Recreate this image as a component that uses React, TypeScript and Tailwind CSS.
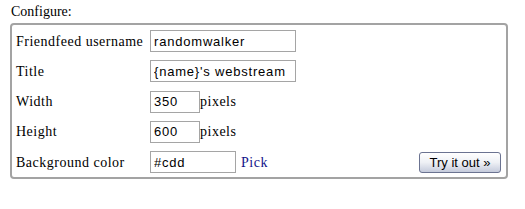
import React from "react";

const serif = { fontFamily: '"Liberation Serif", "Times New Roman", serif' };

function Field({ value, w }: { value: string; w: string }) {
  return (
    <input
      readOnly
      value={value}
      className={`h-[22px] ${w} border border-[#a5a5a5] bg-white pl-[3px] text-[13px] tracking-[0.8px] text-black outline-none`}
      style={{ fontFamily: '"Liberation Sans", Arial, sans-serif' }}
    />
  );
}

function Label({ children }: { children: React.ReactNode }) {
  return <div className="tracking-[0.5px]">{children}</div>;
}

export default function App() {
  return (
    <div className="w-[525px] h-[209px] bg-white text-black text-[14px]" style={serif}>
      <div className="pt-[4px] pl-[11px] leading-[16px]">Configure:</div>
      <div className="ml-[10px] mt-[3px] w-[498px] h-[156px] border-2 border-[#a3a3a3] rounded-[4px] pl-[4px] pr-[5px] pt-[5px]">
        <div className="grid grid-cols-[134px_1fr] auto-rows-[22px] gap-y-[8.25px] items-center">
          <Label>Friendfeed username</Label>
          <div className="flex"><Field value="randomwalker" w="w-[146px]" /></div>
          <Label>Title</Label>
          <div className="flex"><Field value="{name}'s webstream" w="w-[146px]" /></div>
          <Label>Width</Label>
          <div className="flex items-center">
            <Field value="350" w="w-[50px]" />
            <span className="tracking-[0.5px]">pixels</span>
          </div>
          <Label>Height</Label>
          <div className="flex items-center">
            <Field value="600" w="w-[50px]" />
            <span className="tracking-[0.5px]">pixels</span>
          </div>
          <Label>Background color</Label>
          <div className="flex items-center">
            <Field value="#cdd" w="w-[86px]" />
            <span className="ml-[5px] tracking-[0.5px] text-[#14148a]">Pick</span>
            <div className="flex-1" />
            <button
              className="h-[21px] w-[82px] rounded-[3px] border border-[#6b7391] bg-gradient-to-b from-white via-[#eef0f5] to-[#c5cbdc] text-[13px] leading-none text-black"
              style={{ fontFamily: '"Liberation Sans", Arial, sans-serif' }}
            >
              Try it out »
            </button>
          </div>
        </div>
      </div>
    </div>
  );
}
